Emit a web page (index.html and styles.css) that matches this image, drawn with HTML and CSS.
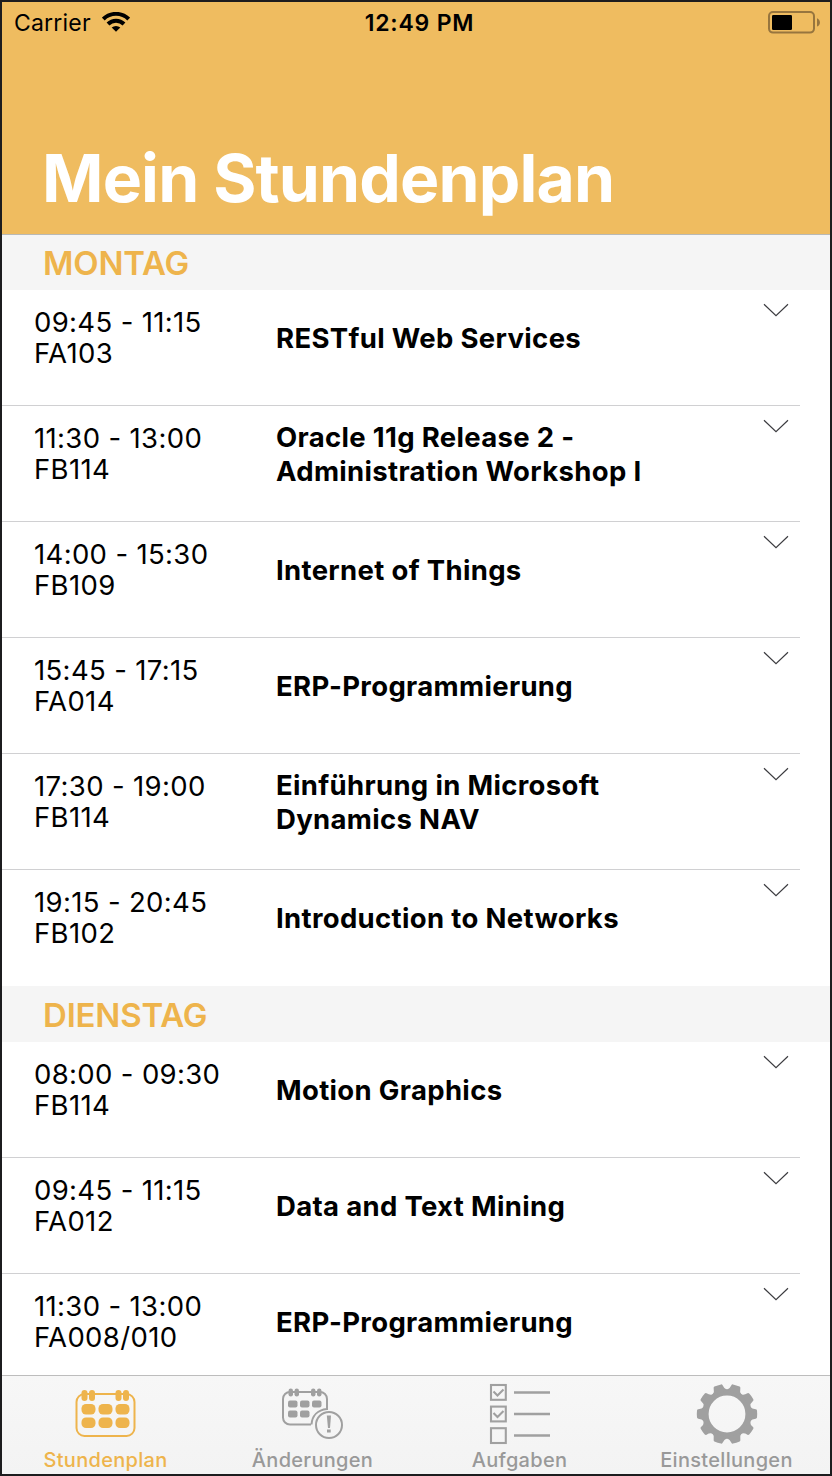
FILE: index.html
```html
<!DOCTYPE html>
<html lang="de">
<head>
<meta charset="utf-8">
<title>Mein Stundenplan</title>
<link rel="stylesheet" href="styles.css">
</head>
<body>
<svg class="defs" width="0" height="0">
  <symbol id="chevron" viewBox="0 0 26 14"><path d="M1 1.2 13 12.6 25 1.2" fill="none" stroke="#3c3c40" stroke-width="1.2"/></symbol>
</svg>
<div class="screen">
  <header class="navbar">
    <div class="status">
      <div class="carrier"><span>Carrier</span>
        <svg class="wifi" width="28" height="20" viewBox="0 0 28 20"><g fill="none" stroke="#000" stroke-width="4"><path d="M1.3 7.100a18 18 0 0 1 25.4 0"/><path d="M6 12a11.4 11.4 0 0 1 16 0"/></g><path d="M14 19.8 9.7 15.6a6.3 6.3 0 0 1 8.6 0z"/></svg>
      </div>
      <div class="clock">12:49 PM</div>
      <svg class="battery" width="52" height="23" viewBox="0 0 52 23"><rect x="1" y="1" width="45" height="20.6" rx="4" fill="none" stroke="#97753e" stroke-width="2"/><rect x="4" y="4" width="20" height="15" rx="1.2"/><path d="M49 7.2c3.9 1.7 3.9 6.7 0 8.4z" fill="#97753e"/></svg>
    </div>
    <h1>Mein Stundenplan</h1>
  </header>
  <main class="list">
    <h2 class="day first">MONTAG</h2>
    <div class="row"><div class="when">09:45 - 11:15<br>FA103</div><div class="course">RESTful Web Services</div><svg class="chev"><use href="#chevron"/></svg></div>
    <div class="row"><div class="when">11:30 - 13:00<br>FB114</div><div class="course">Oracle 11g Release 2 -<br>Administration Workshop I</div><svg class="chev"><use href="#chevron"/></svg></div>
    <div class="row"><div class="when">14:00 - 15:30<br>FB109</div><div class="course">Internet of Things</div><svg class="chev"><use href="#chevron"/></svg></div>
    <div class="row"><div class="when">15:45 - 17:15<br>FA014</div><div class="course">ERP-Programmierung</div><svg class="chev"><use href="#chevron"/></svg></div>
    <div class="row"><div class="when">17:30 - 19:00<br>FB114</div><div class="course">Einführung in Microsoft<br>Dynamics NAV</div><svg class="chev"><use href="#chevron"/></svg></div>
    <div class="row last"><div class="when">19:15 - 20:45<br>FB102</div><div class="course">Introduction to Networks</div><svg class="chev"><use href="#chevron"/></svg></div>
    <h2 class="day">DIENSTAG</h2>
    <div class="row"><div class="when">08:00 - 09:30<br>FB114</div><div class="course">Motion Graphics</div><svg class="chev"><use href="#chevron"/></svg></div>
    <div class="row"><div class="when">09:45 - 11:15<br>FA012</div><div class="course">Data and Text Mining</div><svg class="chev"><use href="#chevron"/></svg></div>
    <div class="row last"><div class="when">11:30 - 13:00<br>FA008/010</div><div class="course">ERP-Programmierung</div><svg class="chev"><use href="#chevron"/></svg></div>
  </main>
  <nav class="tabs">
    <div class="tab active">
      <svg width="62" height="62" viewBox="0.5 0.5 62 62"><rect x="2" y="11.5" width="58" height="42" rx="8" fill="none" stroke="currentColor" stroke-width="2"/><g fill="currentColor"><rect x="7" y="7.500" width="6" height="11" rx="3"/><rect x="14.5" y="7.500" width="6" height="11" rx="3"/><rect x="41" y="7.500" width="6" height="11" rx="3"/><rect x="48.500" y="7.500" width="6" height="11" rx="3"/><rect x="7" y="21.500" width="14" height="10.500" rx="4.500"/><rect x="24" y="21.500" width="14" height="10.500" rx="4.500"/><rect x="41" y="21.500" width="14" height="10.500" rx="4.500"/><rect x="7" y="35" width="14" height="10.500" rx="4.500"/><rect x="24" y="35" width="14" height="10.500" rx="4.500"/><rect x="41" y="35" width="14" height="10.500" rx="4.500"/></g></svg>
      <span>Stundenplan</span>
    </div>
    <div class="tab">
      <svg width="62" height="62" viewBox="0.5 0.5 62 62"><g fill="none" stroke="currentColor" stroke-width="2"><path d="M29.500 42H8.500a7 7 0 0 1-7-7V16.500a7 7 0 0 1 7-7H38.500a7 7 0 0 1 7 7V26.500C36 27.500 30.500 33.500 30 42"/><circle cx="47.500" cy="42.500" r="13"/></g><g fill="currentColor"><rect x="7" y="6" width="4.500" height="8" rx="2.200"/><rect x="13" y="6" width="4.500" height="8" rx="2.200"/><rect x="29.500" y="6" width="4.500" height="8" rx="2.200"/><rect x="35.500" y="6" width="4.500" height="8" rx="2.200"/><rect x="6.500" y="18" width="9.500" height="7" rx="2"/><rect x="18.500" y="18" width="9.500" height="7" rx="2"/><rect x="30.500" y="18" width="9.500" height="7" rx="2"/><rect x="6.500" y="28" width="9.500" height="7" rx="2"/><rect x="18.500" y="28" width="9.500" height="7" rx="2"/><path d="M45.300 33h4.200l-1 12.500h-2z"/><rect x="45.500" y="47" width="3.700" height="3"/></g></svg>
      <span>Änderungen</span>
    </div>
    <div class="tab">
      <svg width="62" height="62" viewBox="0 0 62 62"><g fill="none" stroke="currentColor" stroke-width="2.100"><rect x="2" y="2" width="14.800" height="14.800"/><rect x="2" y="23.600" width="14.800" height="14.800"/><rect x="2" y="45.200" width="14.800" height="14.800"/><path stroke-width="2.400" d="M25 9.500H61M25 31H61M25 52.500H61"/><path d="M4.500 8.500 8.500 12.500 14.500 6.500M4.500 30 8.500 34 14.500 28"/></g></svg>
      <span>Aufgaben</span>
    </div>
    <div class="tab">
      <svg width="62" height="62" viewBox="-31 -31 62 62"><defs><path id="tooth" d="M-7.500-23 Q-5-25-4.700-28.700Q-4.600-29.800-3.500-30Q0-30.400 3.500-30Q4.600-29.800 4.700-28.700Q5-25 7.500-23z" transform="rotate(18)"/></defs><circle r="21.600" fill="none" stroke="currentColor" stroke-width="6.400"/><g fill="currentColor"><use href="#tooth"/><use href="#tooth" transform="rotate(36)"/><use href="#tooth" transform="rotate(72)"/><use href="#tooth" transform="rotate(108)"/><use href="#tooth" transform="rotate(144)"/><use href="#tooth" transform="rotate(180)"/><use href="#tooth" transform="rotate(216)"/><use href="#tooth" transform="rotate(252)"/><use href="#tooth" transform="rotate(288)"/><use href="#tooth" transform="rotate(324)"/></g></svg>
      <span>Einstellungen</span>
    </div>
  </nav>
</div>
</body>
</html>
```
FILE: styles.css
```css
* { box-sizing: border-box; }
body { margin: 0; font-family: Inter, sans-serif; color: #000; background: #fff; }
.defs { display: block; height: 0; }
.screen { width: 832px; height: 1476px; border: 2px solid #1c1c1e; display: flex; flex-direction: column; overflow: hidden; }
.navbar { height: 233px; flex: none; background: #efbc60; border-bottom: 1px solid #b9b9b5; }
.status { height: 40px; padding: 0 10px 0 12px; display: grid; grid-template-columns: 1fr auto 1fr; align-items: center; font-size: 23px; line-height: 28px; }
.carrier { display: flex; align-items: center; gap: 11px; letter-spacing: 0.2px; }
.carrier span, .clock { padding-top: 2px; }
.clock { font-weight: 600; letter-spacing: 0.8px; padding-left: 5px; }
.battery { justify-self: end; }
h1 { margin: 96px 0 0 40px; font-size: 66px; line-height: 80px; font-weight: 700; letter-spacing: -0.85px; color: #fff; white-space: nowrap; }
.list { height: 1140px; flex: none; overflow: hidden; }
.day { margin: 0; height: 56px; padding: 1px 0 0 41px; background: #f5f5f5; color: #eeb44c; font-size: 33px; line-height: 56px; font-weight: 600; letter-spacing: -0.2px; }
.day.first { height: 55px; padding-top: 0; }
.row { height: 116px; width: 798px; border-bottom: 1px solid #d0d0d2; display: grid; grid-template-columns: 242px 1fr 37px; padding-left: 32px; white-space: nowrap; }
.row.last { border-bottom-color: transparent; }
.when { padding-top: 17px; font-size: 27.5px; line-height: 31px; letter-spacing: 0.35px; }
.course { height: 97px; align-self: start; display: flex; align-items: center; font-size: 27.5px; line-height: 33.5px; font-weight: 700; letter-spacing: 0.33px; }
.chev { width: 26px; height: 14px; margin-top: 13px; }
.tabs { flex: 1; border-top: 1px solid #bdbdbd; background: linear-gradient(#f7f7f7, #f3f3f3); display: grid; grid-template-columns: repeat(4, 1fr); color: #999; }
.tab { display: flex; flex-direction: column; align-items: center; padding-top: 7px; font-size: 20px; line-height: 24px; font-weight: 500; letter-spacing: 0.3px; }
.tab svg { flex: none; margin-bottom: 3px; color: #a0a0a0; }
.tab.active, .tab.active svg { color: #eeb44c; }
```
